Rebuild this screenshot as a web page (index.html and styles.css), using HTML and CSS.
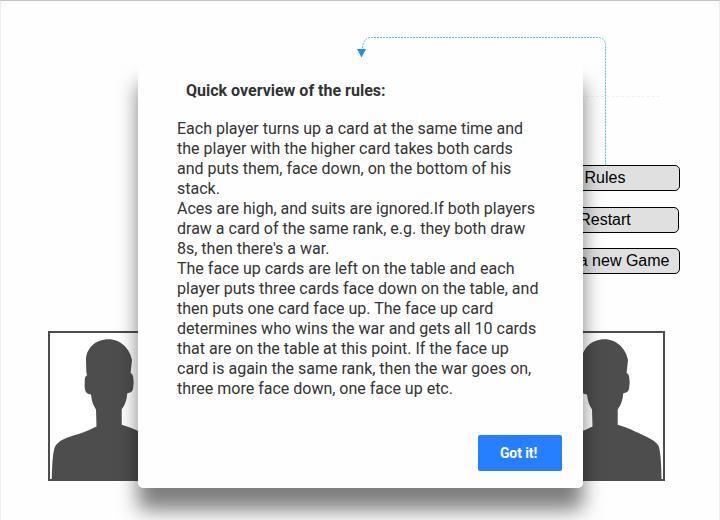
FILE: index.html
```html
<!DOCTYPE html>
<html lang="en">
<head>
<meta charset="utf-8">
<title>War</title>
<link rel="stylesheet" href="styles.css">
</head>
<body>
<svg class="symbols" width="0" height="0">
  <symbol id="avatar" viewBox="0 0 117 146">
    <path d="M58.500 6.200C45.500 6.200 35.500 15.500 36 28L36.300 38Q36.600 42 37.300 42.300Q34.700 43 34.700 48V55Q35.500 61.500 41 61.500C41.500 68 43.500 73 46 76.500L46.500 93.500L39 97C33 100 26 101.500 19 104C10 107 5 111 4 117Q2.200 124 1.700 146H115.500C115.400 132 114.600 120 113 114Q112 111 108 108C99 102.500 91 99.500 85 96.500Q78 93.500 71.700 91.700V76.500C75 72 76.800 67 77.300 60.200Q82 60 83 56Q84.500 49 83 43Q82.300 40.500 80.600 40L82 27C80 16 71 6.200 58.500 6.200Z"/>
  </symbol>
</svg>
<main class="game">
  <div class="divider"></div>
  <nav class="menu">
    <button class="menu-button">Rules</button>
    <button class="menu-button restart">Restart</button>
    <button class="menu-button">Start a new Game</button>
  </nav>
  <section class="players">
    <div class="player"><svg><use href="#avatar"/></svg></div>
    <div class="player"><svg><use href="#avatar"/></svg></div>
  </section>
</main>
<section class="dialog" role="dialog">
  <h1>Quick overview of the rules:</h1>
  <p>Each player turns up a card at the same time and<br>the player with the higher card takes both cards<br>and puts them, face down, on the bottom of his<br>stack.<br>Aces are high, and suits are ignored.If both players<br>draw a card of the same rank, e.g. they both draw<br>8s, then there's a war.<br>The face up cards are left on the table and each<br>player puts three cards face down on the table, and<br>then puts one card face up. The face up card<br>determines who wins the war and gets all 10 cards<br>that are on the table at this point. If the face up<br>card is again the same rank, then the war goes on,<br>three more face down, one face up etc.</p>
  <button class="confirm">Got it!</button>
</section>
<svg class="connector" width="260" height="140" viewBox="0 0 260 140">
  <path class="wire" d="M12.500 18Q13 7.500 22 7.500H247Q255.500 7.500 255.500 16V135"/>
  <path class="arrow" d="M7 19H16L11.500 27.500Z"/>
</svg>
</body>
</html>
```
FILE: styles.css
```css
* { box-sizing: border-box; }
body {
  margin: 0;
  height: 520px;
  overflow: hidden;
  background: #fefefe;
}
.symbols { position: absolute; }
.game {
  display: flex;
  flex-direction: column;
  height: 520px;
  border: solid #eee;
  border-width: 1px 1px 0;
  border-top-color: #c4c4c4;
}
.divider {
  width: 130px;
  margin: 95px 59px 0 auto;
  border-top: 1px dashed #f0f0f0;
}
.menu {
  display: flex;
  flex-direction: column;
  align-items: center;
  width: 150px;
  margin: 68px 39px 0 auto;
}
.menu-button {
  width: 150px;
  height: 26px;
  padding: 0;
  border: 1px solid #000;
  border-radius: 5px;
  background: #e0e0e0;
  color: #000;
  font: 16px/24px "Liberation Sans", Arial, sans-serif;
  white-space: nowrap;
}
.menu-button.restart {
  width: 148px;
  margin: 16px 0 15px;
}
.players {
  display: flex;
  justify-content: space-between;
  width: 617px;
  margin: 57px 0 0 47px;
}
.player {
  width: 121px;
  height: 150px;
  border: 2px solid #4d4d4d;
  background: #fff;
}
.player svg {
  display: block;
  width: 117px;
  height: 146px;
  fill: #4d4d4d;
}
.dialog {
  position: absolute;
  left: 138px;
  top: 62px;
  display: flex;
  flex-direction: column;
  width: 445px;
  height: 426px;
  padding: 19px 21px 17px 39px;
  border-radius: 5px;
  background: #fefefe;
  box-shadow: 0 22px 20px rgba(0, 0, 0, .5);
  color: #333;
  font: 16px/20px Roboto, sans-serif;
}
.dialog h1 {
  margin: 0 0 18px 9px;
  font-size: 16px;
  line-height: 20px;
  font-weight: 700;
}
.dialog p { margin: 0; white-space: nowrap; }
.confirm {
  align-self: flex-end;
  width: 84px;
  height: 36px;
  margin-top: auto;
  padding: 0 3px 0 0;
  border: 0;
  border-radius: 2px;
  background: #267fff;
  color: #fff;
  font: 700 14px/36px Roboto, sans-serif;
  letter-spacing: -.1px;
}
.connector {
  position: absolute;
  left: 350px;
  top: 30px;
}
.wire {
  fill: none;
  stroke: #5bbcf2;
  stroke-width: 1;
  stroke-dasharray: 2 1;
}
.arrow { fill: #1e8fe8; }
```
